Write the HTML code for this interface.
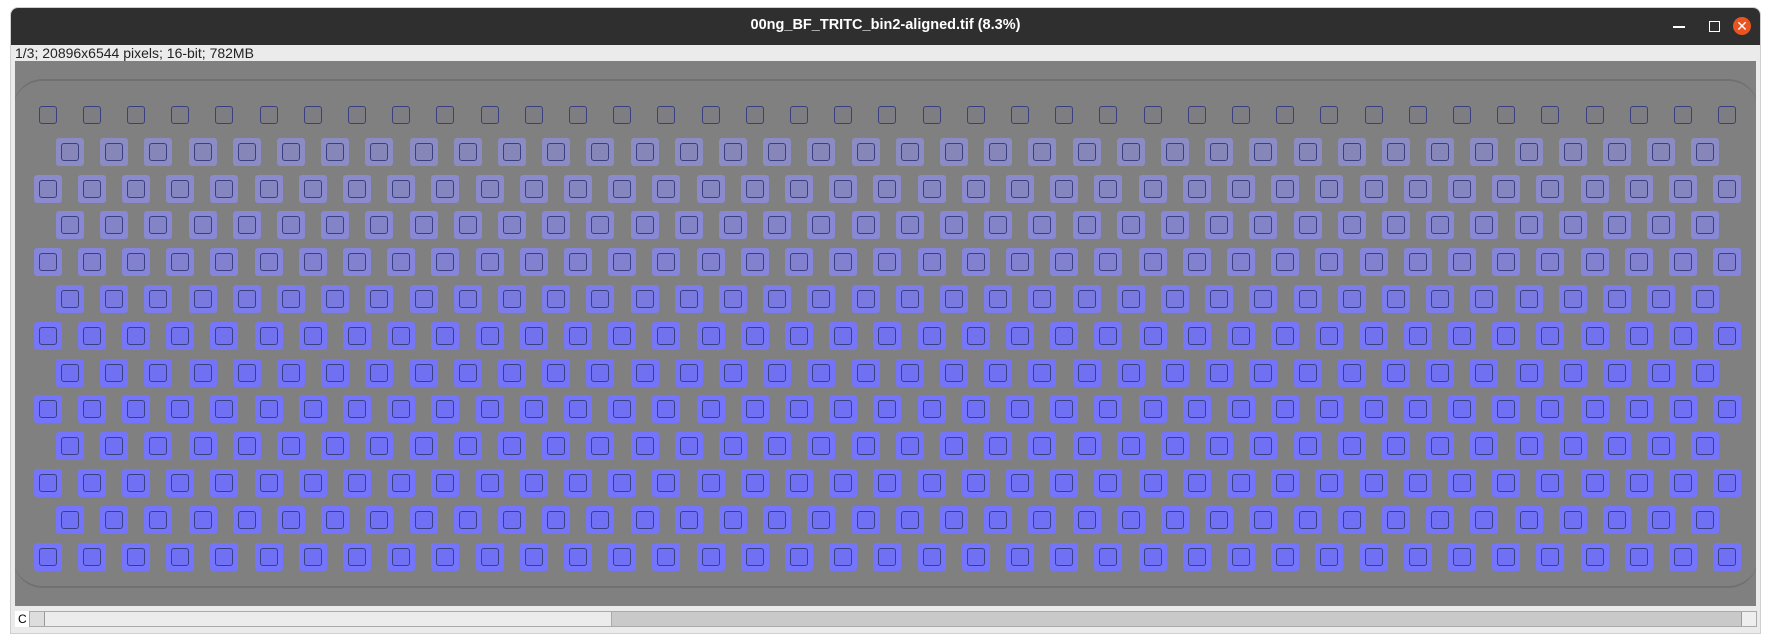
<!DOCTYPE html>
<html><head><meta charset="utf-8"><style>
body{margin:0;width:1771px;height:643px;background:#fff;position:relative;overflow:hidden;font-family:"Liberation Sans",sans-serif}
#win{position:absolute;left:10px;top:7px;width:1751px;height:627px;background:#ebebeb;border:1px solid #cfcfcf;border-radius:8px 8px 0 0;box-sizing:border-box;overflow:hidden}
#title{position:absolute;left:0;top:0;width:100%;height:37px;background:#2f2f2f;color:#fff;font-weight:bold;font-size:14.5px;text-align:center;line-height:35px}
#info{position:absolute;left:4px;top:37px;font-size:14px;color:#222}
#img{position:absolute;left:15px;top:61px;width:1741px;height:545px;background:#808080;overflow:hidden}
.sq{position:absolute;width:28px;height:28px;border-radius:3px}
.sq i{position:absolute;left:5px;top:5px;width:16px;height:16px;border:1.5px solid #3a3f80;border-radius:3px}
#sb{position:absolute;left:29px;top:611px;width:1728px;height:16px;background:#c9c9c9;border:1px solid #aaa;box-sizing:border-box}
</style></head><body>
<div id="win">
<div id="title">00ng_BF_TRITC_bin2-aligned.tif (8.3%)</div>
<div style="position:absolute;right:75px;top:18px;width:12px;height:1.5px;background:#fff"></div>
<div style="position:absolute;right:40px;top:13px;width:9px;height:9px;border:1.5px solid #fff"></div>
<div style="position:absolute;right:9px;top:9px;width:18px;height:18px;border-radius:50%;background:#e95420;color:#fff;font-size:14px;text-align:center;line-height:18px">✕</div>
<div id="info">1/3; 20896x6544 pixels; 16-bit; 782MB</div>
</div>
<div id="img">
<div style="position:absolute;left:-2px;top:18px;width:1745px;height:505px;border-top:2px solid #666;border-bottom:2px solid #666;border-radius:30px;opacity:.6"></div>
</div>
<div style="position:absolute;left:15px;top:611px;width:14px;height:16px;background:#fff;font-size:12px;line-height:16px;padding-left:3px;box-sizing:border-box">C</div>
<div id="sb">
<div style="position:absolute;left:0;top:0;width:581px;height:14px;background:#ececec;border-right:1px solid #aaa"></div>
<div style="position:absolute;left:0;top:0;width:14px;height:14px;background:#ddd;border-right:1px solid #999"></div>
<div style="position:absolute;right:0;top:0;width:14px;height:14px;background:#eee;border-left:1px solid #999"></div>
</div>
<script>
var img=document.getElementById('img');
var cols=[null,'#8c8cc4','#8a8acc','#8888d4','#8585dc','#7c7cea','#7676f6','#7474fa','#7474fc','#7474fc','#7474fc','#7474fc','#7474fc'];
var inn=[null,'#8686b8','#8585c0','#8383c8','#8181d0','#7979e0','#7272ee','#7070f2','#7070f4','#7070f4','#7070f4','#7070f4','#7070f4'];
var h='';
for(var r=0;r<13;r++){
 var y=115+r*36.8-61-14;
 var odd=r%2==1;
 var n=odd?38:39;
 var x0=odd?70:47.5;
 var bg=cols[r]||'transparent';
 var inner=inn[r]||'#7d7d82';
 for(var c=0;c<n;c++){
  var x=x0+c*44.2-15-14;
  h+='<div class="sq" style="left:'+x.toFixed(1)+'px;top:'+y.toFixed(1)+'px;background:'+bg+'"><i style="background:'+inner+'"></i></div>';
 }
}
img.insertAdjacentHTML('beforeend',h);
</script>
</body></html>
